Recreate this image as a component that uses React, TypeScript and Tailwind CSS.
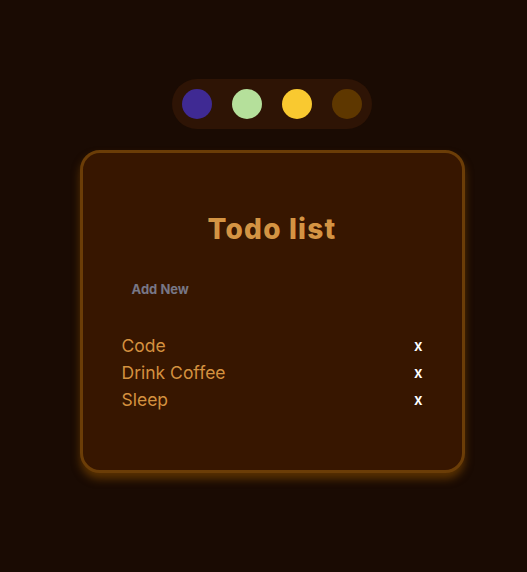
import React, { useState } from 'react';

const swatches = ['#3f2a93', '#b5e09b', '#f9c930', '#5e3700'];

const App: React.FC = () => {
  const [todos] = useState<string[]>(['Code', 'Drink Coffee', 'Sleep']);

  return (
    <div className="min-h-[572px] w-full bg-[#1a0b03] font-['Inter',sans-serif]">
      <div className="flex flex-col items-center pl-[17px] pt-[79px]">
        <div className="flex gap-[20px] rounded-full bg-[#2e1405] px-[10px] py-[10px]">
          {swatches.map((c) => (
            <button key={c} className="h-[30px] w-[30px] rounded-full" style={{ backgroundColor: c }} />
          ))}
        </div>

        <div className="mt-[21px] h-[323px] w-[385px] rounded-[20px] border-[3px] border-[#6b3d07] bg-[#371600] shadow-[0_6px_8px_rgba(140,80,0,0.55)]">
          <h1 className="mt-[62px] text-center text-[28px] font-extrabold leading-none tracking-[1.2px] text-[#d49443]">Todo list</h1>
          <button className="ml-[49px] mt-[37px] text-[13px] font-bold text-[#777786]">Add New</button>
          <ul className="mt-[33px] flex flex-col px-[39px]">
            {todos.map((t) => (
              <li key={t} className="flex h-[27px] items-center justify-between">
                <span className="text-[17.5px] text-[#d4913f]">{t}</span>
                <span className="text-[15px] font-semibold text-white">x</span>
              </li>
            ))}
          </ul>
        </div>
      </div>
    </div>
  );
};

export default App;
